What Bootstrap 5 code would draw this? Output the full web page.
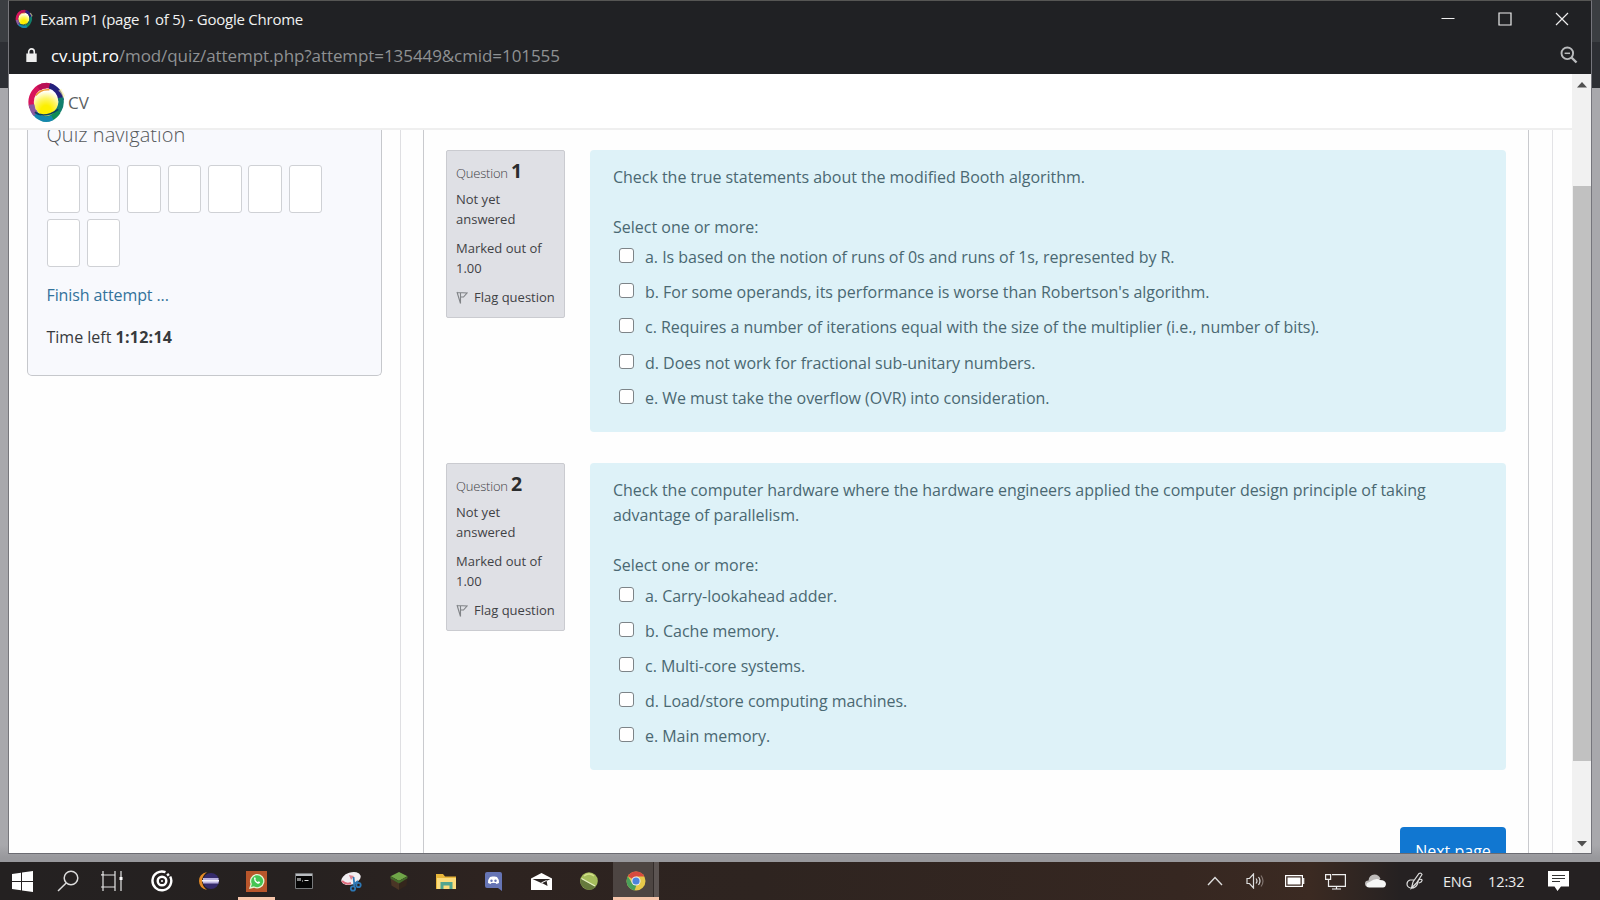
<!DOCTYPE html>
<html lang="en">
<head>
<meta charset="utf-8">
<title>Exam P1 (page 1 of 5)</title>
<link href="https://cdn.jsdelivr.net/npm/bootstrap@5.3.0/dist/css/bootstrap.min.css" rel="stylesheet">
<script src="https://cdn.jsdelivr.net/npm/bootstrap@5.3.0/dist/js/bootstrap.bundle.min.js"></script>
<style>
body{font-family:"Open Sans","Noto Sans",sans-serif;font-size:16px;line-height:25px;color:#373a3c}
.desktop{width:1600px;height:900px;background:linear-gradient(#3b3e42 0 42px,#2d2f34 42px 88px,#a8a8ac 88px 845px,#98989c 858px)}
.win{height:854px;margin:0 8px 0 8px;border-top:1px solid #565654;border-right:1px solid #75757c;border-bottom:1px solid #6c6c72;border-left:1px solid #77777c;background:#fefefe}
.bar-title{height:38px;background:#202124;color:#f1f1f1;padding:0 1px 2px 6px;font-size:15px;letter-spacing:-.23px}
.bar-url{height:35px;background:#202124;color:#8f9193;padding:0 13px 3px 17px;font-size:17px;letter-spacing:-.08px}
.bar-url .host{color:#fff;letter-spacing:-.2px}
.bar-url .lock{margin:0 14px 0 0}
.win-btn{width:57px}
.site-head{height:56px;padding:2px 0 0 18px;border-bottom:2px solid #efefef;background:#fff;color:#5c5f62;font-size:17px}
.side{width:392px;padding-left:18px;border-right:1px solid #dfdfe2}
.quiz-nav{width:355px;height:246px;background:#f8f9fd;border:1px solid #c6c8cc;border-top:0;border-radius:0 0 5px 5px;padding:0 17px 0 18.500px}
.quiz-nav h5{font-size:20px;font-weight:300;line-height:24px;margin:-7px 0 18px;color:#55585b;letter-spacing:.06px}
.cells{gap:6px 6.900px;width:300px}
.cell{width:33.500px;height:48px;background:#fff;border:1px solid #cfd1d5;border-radius:3px}
.finish{margin-top:16px;color:#33729b;text-decoration:none;letter-spacing:-.1px}
.time{margin-top:17px}
.time b{letter-spacing:.25px}
.region{margin:0 23px 0 22px;border:solid #c9cace;border-width:0 1px;padding:20px 22px 0 22px}
.page-edge{border-right:1px solid #e3e3e6;margin-right:19px}
.info{width:119px;height:168px;background:#dfe0e5;border:1px solid #cacbd0;border-radius:2px;padding:8px 8px 0 9px;font-size:13px;line-height:20px;color:#3f4245}
.info h3{font-size:13px;font-weight:300;line-height:24px;margin:0 0 4px;letter-spacing:-.2px}
.info h3 b{font-size:19.500px;font-weight:700;color:#2a2c2e}
.info p{margin:0 0 9px}
.flag{gap:6px;white-space:nowrap}
.question{gap:25px;margin-bottom:31.500px}
.formulation{width:916px;background:#def2f8;border-radius:4px;padding:15px 22px 16px 23px;color:#4a6872}
.formulation p{margin:0 0 25px;letter-spacing:-.03px}
.opt{height:35.200px;padding-left:6px;letter-spacing:-.03px}
.opt .form-check-input{width:15px;height:15px;margin:-4px 11px 0 0;border:1px solid #7d8488;border-radius:3px;background:#fff}
.next{width:106px;height:40px;padding:9px 0 0;border-radius:4px 4px 0 0;background:#1177d1;color:#fff;border:0;margin-top:25px;line-height:25px;font-size:16px}
.scroll{width:19px;background:#f1f1f1;padding:8px 0 6px}
.thumb{width:18px;height:575px;background:#c1c1c1;margin-top:98px}
.taskbar{height:38px;margin-top:8px;background:linear-gradient(90deg,#242121 0,#262120 300px,#2d2320 480px,#2e2420 760px,#362721 1180px,#3b2a22 1310px,#2c2422 1375px,#252122 1400px);color:#ececec}
.ico{width:47.450px;height:38px}
.ico svg,.tray svg{display:block}
.run{border-bottom:3px solid #f6c5ab;padding-top:3px}
.tray{width:40px}
</style>
</head>
<body class="overflow-hidden">
<div class="desktop d-flex flex-column overflow-hidden">
 <div class="win d-flex flex-column flex-shrink-0 overflow-hidden">
  <div class="bar-title d-flex align-items-center flex-shrink-0">
   <svg width="19" height="20" viewBox="0 0 42 44"><use href="#ring"/></svg>
   <span class="me-auto" style="margin-left:6px">Exam P1 (page 1 of 5) - Google Chrome</span>
   <span class="win-btn d-flex justify-content-center"><svg width="14" height="14" fill="none" stroke="#eee"><path d="M.5 6.500h13"/></svg></span>
   <span class="win-btn d-flex justify-content-center"><svg width="14" height="14" fill="none" stroke="#eee" stroke-width="1.200"><path d="M1 1h12v12H1z"/></svg></span>
   <span class="win-btn d-flex justify-content-center"><svg width="14" height="14" fill="none" stroke="#eee" stroke-width="1.200"><path d="M1 1l12 12M13 1L1 13"/></svg></span>
  </div>
  <div class="bar-url d-flex align-items-center flex-shrink-0">
   <svg class="lock" width="11" height="15" viewBox="0 0 11 15"><path d="M.3 5.500h10.400V14H.3z" fill="#eee"/><path d="M2.700 6V3.700a2.800 2.800 0 0 1 5.600 0V6" fill="none" stroke="#eee" stroke-width="1.600"/></svg>
   <span class="host">cv.upt.ro</span><span class="me-auto">/mod/quiz/attempt.php?attempt=135449&amp;cmid=101555</span>
   <svg width="18" height="18" fill="none" stroke="#b9bbbd" stroke-width="1.900"><circle cx="7.300" cy="7.300" r="5.800"/><path d="M11.500 11.500l5 5" stroke-width="2.400"/><path d="M4.600 7.300h5.400" stroke-width="1.500"/></svg>
  </div>
  <div class="d-flex flex-grow-1 overflow-hidden">
   <div class="d-flex flex-column flex-grow-1">
    <header class="site-head d-flex align-items-center flex-shrink-0">
     <svg width="41" height="43" viewBox="0 0 42 44">
      <defs><radialGradient id="glow" cx=".5" cy=".85" r=".75"><stop offset=".3" stop-color="#fdf000"/><stop offset=".65" stop-color="#fdf56a"/><stop offset="1" stop-color="#fff"/></radialGradient></defs>
      <g id="ring">
       <ellipse cx="19.500" cy="21.500" rx="12.500" ry="14" fill="url(#glow)"/>
       <g fill="none" stroke-width="5.600">
        <path d="M5 27 A15 17 0 0 1 20 4.800" stroke="#d8145c"/>
        <path d="M12 7.500 A15 17 0 0 1 26 6" stroke="#b80f55"/>
        <path d="M23 5 A15 17 0 0 1 35 20" stroke="#23207c"/>
        <path d="M34.600 17 A15 17 0 0 1 30 33" stroke="#117f6d"/>
        <path d="M32 31 A15 17 0 0 1 15 38" stroke="#118c55"/>
        <path d="M26 37.500 A15 17 0 0 1 7 31" stroke="#1487ae"/>
        <path d="M9 34 A15 17 0 0 1 4.600 24" stroke="#8a5aa0"/>
       </g>
       <path d="M9 15 Q14 8 23 9" fill="none" stroke="#f09a32" stroke-width="1.500"/>
       <path d="M8 32Q18 39 32 29" fill="none" stroke="#083f63" stroke-width="1.600"/>
       <path d="M35 8l4 7-2 3q-1-5-5-8z" fill="#faf4a0" opacity=".6"/>
      </g>
     </svg><span>CV</span>
    </header>
    <div class="d-flex flex-grow-1 overflow-hidden">
     <aside class="side flex-shrink-0">
      <div class="quiz-nav d-flex flex-column">
       <h5>Quiz navigation</h5>
       <div class="cells d-flex flex-wrap">
        <a class="cell"></a><a class="cell"></a><a class="cell"></a><a class="cell"></a><a class="cell"></a><a class="cell"></a><a class="cell"></a><a class="cell"></a><a class="cell"></a>
       </div>
       <a class="finish">Finish attempt ...</a>
       <div class="time">Time left <b>1:12:14</b></div>
      </div>
     </aside>
     <main class="page-edge flex-grow-1">
      <div class="region h-100">
       <section class="question d-flex align-items-start">
        <div class="info">
         <h3>Question <b>1</b></h3>
         <p>Not yet answered</p><p>Marked out of 1.00</p>
         <div class="flag d-flex align-items-center"><svg width="12" height="13" fill="none" stroke="#808387" stroke-width="1.100"><path d="M1 1l3.500 11.500M4.500 12.500V2M1.500 1.500L11 2 7.500 6H5"/></svg>Flag question</div>
        </div>
        <div class="formulation">
         <p>Check the true statements about the modified Booth algorithm.</p>
         <div>Select one or more:</div>
         <label class="opt d-flex align-items-center"><input class="form-check-input" type="checkbox">a. Is based on the notion of runs of 0s and runs of 1s, represented by R.</label>
         <label class="opt d-flex align-items-center"><input class="form-check-input" type="checkbox">b. For some operands, its performance is worse than Robertson's algorithm.</label>
         <label class="opt d-flex align-items-center"><input class="form-check-input" type="checkbox">c. Requires a number of iterations equal with the size of the multiplier (i.e., number of bits).</label>
         <label class="opt d-flex align-items-center"><input class="form-check-input" type="checkbox">d. Does not work for fractional sub-unitary numbers.</label>
         <label class="opt d-flex align-items-center"><input class="form-check-input" type="checkbox">e. We must take the overflow (OVR) into consideration.</label>
        </div>
       </section>
       <section class="question d-flex align-items-start">
        <div class="info">
         <h3>Question <b>2</b></h3>
         <p>Not yet answered</p><p>Marked out of 1.00</p>
         <div class="flag d-flex align-items-center"><svg width="12" height="13" fill="none" stroke="#808387" stroke-width="1.100"><path d="M1 1l3.500 11.500M4.500 12.500V2M1.500 1.500L11 2 7.500 6H5"/></svg>Flag question</div>
        </div>
        <div class="formulation">
         <p>Check the computer hardware where the hardware engineers applied the computer design principle of taking<br>advantage of parallelism.</p>
         <div>Select one or more:</div>
         <label class="opt d-flex align-items-center"><input class="form-check-input" type="checkbox">a. Carry-lookahead adder.</label>
         <label class="opt d-flex align-items-center"><input class="form-check-input" type="checkbox">b. Cache memory.</label>
         <label class="opt d-flex align-items-center"><input class="form-check-input" type="checkbox">c. Multi-core systems.</label>
         <label class="opt d-flex align-items-center"><input class="form-check-input" type="checkbox">d. Load/store computing machines.</label>
         <label class="opt d-flex align-items-center"><input class="form-check-input" type="checkbox">e. Main memory.</label>
        </div>
       </section>
       <div class="d-flex justify-content-end"><button class="next">Next page</button></div>
      </div>
     </main>
    </div>
   </div>
   <div class="scroll d-flex flex-column align-items-center flex-shrink-0">
    <svg width="10" height="6" class="flex-shrink-0"><path d="M0 5.500L5 0l5 5.500z" fill="#505050"/></svg>
    <div class="thumb"></div>
    <svg width="10" height="6" class="mt-auto flex-shrink-0"><path d="M0 0h10L5 5.500z" fill="#505050"/></svg>
   </div>
  </div>
 </div>

 <div class="taskbar d-flex align-items-center flex-shrink-0">
  <div class="d-flex align-items-center justify-content-center" style="width:45px"><svg width="21" height="21" fill="#fff"><path d="M0 3l9-1.300V10H0zM10 1.500L21 0v10H10zM0 11h9v8.300L0 18zM10 11h11v10L10 19.500z"/></svg></div>
  <div class="d-flex align-items-center justify-content-center" style="width:45px"><svg width="22" height="22" fill="none" stroke="#dcdcdc" stroke-width="1.500"><circle cx="14" cy="8" r="6.800"/><path d="M9.200 13L1 21"/></svg></div>
  <div class="d-flex align-items-center justify-content-center" style="width:44px;margin-right:4px"><svg width="22" height="22" fill="none" stroke="#e4e4e4" stroke-width="1.200"><path d="M2 1v4h12V1M2 21v-4h12v4M2 5v12M14 5v12M0 4.800h3M0 17h3M20 1v20"/><path d="M18.500 7h3v3h-3z" fill="#fff" stroke="none"/></svg></div>
  <div class="ico d-flex align-items-center justify-content-center"><svg width="22" height="22" fill="none" stroke="#fff"><path d="M14.500 2.200A9.400 9.400 0 1 0 19.200 6.500" stroke-width="2.400"/><circle cx="11" cy="11" r="4.300" stroke-width="2.400"/><circle cx="11" cy="11" r="1" fill="#fff" stroke="none"/><path d="M16 5.500L18 4" stroke-width="2.400"/></svg></div>
  <div class="ico d-flex align-items-center justify-content-center"><svg width="21" height="18"><path d="M8 0Q0 2 0 9t8 9Q3 14 3 9t5-9z" fill="#e58a25"/><circle cx="12" cy="9" r="8" fill="#352b6b"/><path d="M4 6h15.500v5.500H4z" fill="#bab2df"/><path d="M3 8h17v1.600H3z" fill="#f2f0fb"/></svg></div>
  <div class="ico d-flex justify-content-center"><div class="run d-flex align-items-center justify-content-center" style="width:37px"><svg width="21" height="21"><path d="M0 0h21v21H0z" fill="#b8562b"/><path d="M4 17l1.200-4A6.600 6.600 0 1 1 8 16z" fill="#45c554" stroke="#e5f6d5" stroke-width="1.300"/><path d="M8 7q1-1.500 1.700.2L9.500 9q.8 1.500 2.200 2l1.200-.7 1.300.9q-.8 2-2.900 1.200Q8 11 8 7z" fill="#fff"/></svg></div></div>
  <div class="ico d-flex align-items-center justify-content-center"><svg width="18" height="16"><path d="M.5.500h17v15H.5z" fill="#050505" stroke="#77797b"/><path d="M1 1h16v2H1z" fill="#b9bcc0"/><path d="M3 5v3M5 5v3M7 8h1M9.500 7.500h4" stroke="#ddd" stroke-width="1.200"/></svg></div>
  <div class="ico d-flex align-items-center justify-content-center"><svg width="22" height="21"><ellipse cx="11" cy="7.500" rx="10" ry="6" transform="rotate(-18 11 7.500)" fill="#f2eef2"/><path d="M2 10q4 4 9 2" stroke="#df6d7d" stroke-width="2" fill="none"/><path d="M9 4l5 1-3 4z" fill="#db8190"/><g fill="none" stroke="#2d78b5" stroke-width="1.800"><path d="M13.500 6l1 9M18 10l-5 4"/><circle cx="13" cy="17.500" r="2.200"/><circle cx="18.500" cy="14" r="2.200"/></g></svg></div>
  <div class="ico d-flex align-items-center justify-content-center"><svg width="18" height="18"><path d="M9 0l8.500 4.300L9 9 .5 4.300z" fill="#6fa548"/><path d="M.500 4.300L9 9v9L1.500 13.500z" fill="#4a3525"/><path d="M17.500 4.300L9 9v9l7.500-4.500z" fill="#34261c"/><path d="M.5 4.300L9 9l8.500-4.700v2L9 11.500.5 6.500z" fill="#436b2b"/></svg></div>
  <div class="ico d-flex align-items-center justify-content-center"><svg width="20" height="17"><path d="M0 1h7l2 2.500h11V16H0z" fill="#e8b63a"/><path d="M1 5h19v11H1z" fill="#fbdc7c"/><path d="M4.500 16V9h12v7h-3v-3.500h-6V16z" fill="#51a58f"/></svg></div>
  <div class="ico d-flex align-items-center justify-content-center"><svg width="17" height="19"><path d="M2 0h13q2 0 2 2v17l-4-3H2q-2 0-2-2V2q0-2 2-2z" fill="#6675b5"/><path d="M3 11q0-4 2-6l2.500-.5h2L12 5q2 2 2 6l-2.500 1-1-1h-4l-1 1z" fill="#fff"/><circle cx="6.500" cy="8.700" r="1.200" fill="#6675b5"/><circle cx="10.500" cy="8.700" r="1.200" fill="#6675b5"/></svg></div>
  <div class="ico d-flex align-items-center justify-content-center"><svg width="21" height="17"><path d="M0 5.500L10.500 0 21 5.500V17H0z" fill="#fff"/><path d="M1.500 6h18L10.800 10.200zM10 9.500l6.500 3.500-1-6z" fill="#292322"/></svg></div>
  <div class="ico d-flex align-items-center justify-content-center"><svg width="18" height="18"><circle cx="9" cy="9" r="8.800" fill="#a5bd5c"/><path d="M1 6.500l13 7.500q2 .5 2.500 0A9 9 0 0 1 .3 9z" fill="#66793d"/><path d="M1.500 6.500L15 14" stroke="#e4efc2" stroke-width="1.300"/><path d="M4 4q5-4 10 0" stroke="#d3e08b" stroke-width="1.500" fill="none"/></svg></div>
  <div class="ico d-flex justify-content-center"><div class="run d-flex align-items-center justify-content-center flex-shrink-0" style="width:46px;background:linear-gradient(90deg,#4d4542 0 40px,#332c2a 40px 41px,#5c5452 41px)"><svg width="20" height="20" viewBox="0 0 20 20"><circle cx="10" cy="10" r="9.500" fill="#e6c84a"/><path d="M10 10L1.800 5.200A9.500 9.500 0 0 1 18.400 5.500H10z" fill="#d64a3e"/><path d="M1.800 5.200L6 12l4.500 2-2 5.400A9.500 9.500 0 0 1 1.800 5.200z" fill="#4aa05a"/><circle cx="10" cy="10" r="4.600" fill="#eee"/><circle cx="10" cy="10" r="3.600" fill="#4b83dc"/></svg></div></div>
  <div class="tray d-flex align-items-center justify-content-center ms-auto"><svg width="16" height="10" fill="none" stroke="#ddd" stroke-width="1.400"><path d="M1 9l7-7.500L15 9"/></svg></div>
  <div class="tray d-flex align-items-center justify-content-center"><svg width="18" height="16" fill="none" stroke="#ddd" stroke-width="1.200"><path d="M1 5.500h2.500L7.500 1v14l-4-4.500H1zM10 5.500q2 2.500 0 5M12.500 4q3 4 0 8"/><path d="M15 2.500q4 5.500 0 11" stroke="#80746f"/></svg></div>
  <div class="tray d-flex align-items-center justify-content-center"><svg width="20" height="12"><path d="M.6.600h16.800v10.800H.6z" fill="none" stroke="#fff" stroke-width="1.200"/><path d="M2.500 2.500h13v7h-13z" fill="#fff"/><path d="M18.700 3v6" stroke="#fff" stroke-width="1.200"/></svg></div>
  <div class="tray d-flex align-items-center justify-content-center"><svg width="21" height="17" fill="none" stroke="#eee" stroke-width="1.200"><path d="M7 1.600h13.400v11.800H3.500V7M.600 1.600h5v4.800h-5zM7 16h9M11.500 13.500V16"/></svg></div>
  <div class="tray d-flex align-items-center justify-content-center"><svg width="21" height="14"><path d="M3 13q-3-.5-3-3.500t3.500-3Q4 1 9.500.5 14 .5 15.500 5z" fill="#bdbab9"/><path d="M2 13q-2-4 2.500-5Q11 3.500 15 6q5.500 0 6 4-.5 3.500-3 3.500H4z" fill="#f6f6f6"/></svg></div>
  <div class="tray d-flex align-items-center justify-content-center"><svg width="19" height="18" fill="none" stroke="#ddd" stroke-width="1.200"><path d="M5.500 16L7 10l6-8.500q2-1 3 1L10.500 11zM8 8H4Q1 9 1 12t3.500 4q5 .5 7-4l1-4q3-1.500 3.500 0t-3 3"/></svg></div>
  <div style="width:37px;padding-left:8px;font-size:14.500px;letter-spacing:-.2px">ENG</div>
  <div style="width:66px;padding-left:16px;font-size:14.500px;letter-spacing:-.1px">12:32</div>
  <div class="d-flex justify-content-center" style="width:20px;margin:0 32px 0 10px"><svg width="21" height="20" class="flex-shrink-0"><path d="M0 0h21v15.500h-8L9.500 20 6.500 15.500H0z" fill="#fff"/><path d="M4 4.500h13M4 7.500h13M4 10.500h8" stroke="#333" stroke-width="1.100"/></svg></div>
 </div>
</div>
</body>
</html>
